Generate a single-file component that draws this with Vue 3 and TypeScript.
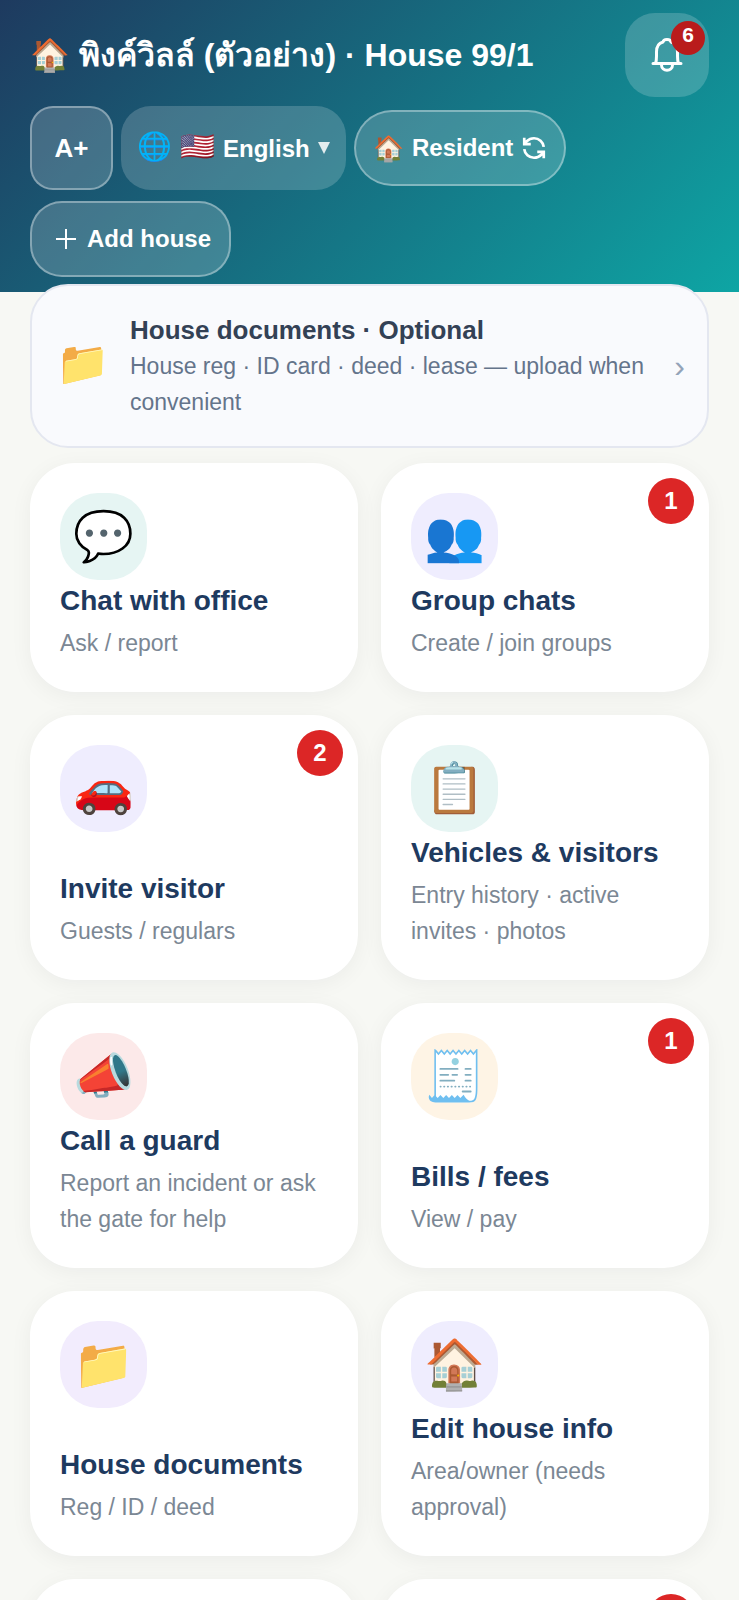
<script setup lang="ts">
import { ref } from 'vue'

interface Tile {
  icon: string
  tone: string
  title: string
  sub: string
  badge?: number
}

const language = ref('en')

const tiles: Tile[] = [
  { icon: '💬', tone: 'mint', title: 'Chat with office', sub: 'Ask / report' },
  { icon: '👥', tone: 'indigo', title: 'Group chats', sub: 'Create / join groups', badge: 1 },
  { icon: '🚗', tone: 'indigo', title: 'Invite visitor', sub: 'Guests / regulars', badge: 2 },
  { icon: '📋', tone: 'mint', title: 'Vehicles & visitors', sub: 'Entry history · active invites · photos' },
  { icon: '📣', tone: 'rose', title: 'Call a guard', sub: 'Report an incident or ask the gate for help' },
  { icon: '🧾', tone: 'amber', title: 'Bills / fees', sub: 'View / pay', badge: 1 },
  { icon: '📁', tone: 'violet', title: 'House documents', sub: 'Reg / ID / deed' },
  { icon: '🏠', tone: 'indigo', title: 'Edit house info', sub: 'Area/owner (needs approval)' },
]
</script>

<template>
  <div class="page">
    <header class="header">
      <div class="title-row">
        <h1 class="title">🏠 พิงค์วิลล์ (ตัวอย่าง) · House 99/1</h1>
        <button class="bell" type="button" aria-label="Notifications">
          <svg viewBox="0 0 32 36" aria-hidden="true">
            <path d="M2 26.500H30M4.500 26.500C5.500 24 5.500 22 5.500 19V15C5.500 9.500 8 6 12 5C12.500 1.500 19.500 1.500 20 5C24 6 26.500 9.500 26.500 15V19C26.500 22 26.500 24 27.500 26.500M10.500 28C10.500 35 21.500 35 21.500 28" />
          </svg>
          <span class="bell-count">6</span>
        </button>
      </div>
      <div class="controls">
        <button class="chip size-chip" type="button">A+</button>
        <label class="chip lang-chip">
          <span class="chip-emoji">🌐</span>
          <span class="chip-emoji">🇺🇸</span>
          <select v-model="language" class="lang-select" aria-label="Language">
            <option value="en">English</option>
          </select>
          <span class="caret" aria-hidden="true"></span>
        </label>
        <button class="chip role-chip" type="button">
          <span class="role-emoji">🏠</span>
          <span>Resident</span>
          <svg class="swap" viewBox="0 0 24 24" aria-hidden="true">
            <path d="M21 11a9 9 0 0 0-9-8 9.750 9.750 0 0 0-6.740 2.740L3 8M3 2.500v6h6M3 13a9 9 0 0 0 9 8 9.750 9.750 0 0 0 6.740-2.740L21 16M15 15.500h6v6" />
          </svg>
        </button>
        <button class="chip add-chip" type="button">
          <svg class="plus" viewBox="0 0 20 20" aria-hidden="true"><path d="M10 0V20M0 10H20" /></svg>
          <span>Add house</span>
        </button>
      </div>
    </header>

    <main class="content">
      <button class="notice" type="button">
        <span class="notice-icon">📁</span>
        <span class="notice-text">
          <strong class="notice-title">House documents · Optional</strong>
          <span class="notice-sub">House reg · ID card · deed · lease — upload when convenient</span>
        </span>
        <span class="chevron" aria-hidden="true">›</span>
      </button>

      <div class="grid">
        <button v-for="tile in tiles" :key="tile.title" class="tile" type="button">
          <span class="tile-icon" :class="tile.tone">{{ tile.icon }}</span>
          <span class="tile-text">
            <strong class="tile-title">{{ tile.title }}</strong>
            <span class="tile-sub">{{ tile.sub }}</span>
          </span>
          <span v-if="tile.badge" class="badge">{{ tile.badge }}</span>
        </button>
        <div class="tile"></div>
        <div class="tile"><span class="badge"></span></div>
      </div>
    </main>
  </div>
</template>

<style>
body {
  margin: 0;
  background: #f7f8f4;
}
</style>

<style scoped>
.page {
  height: 100vh;
  overflow: hidden;
  background: #f7f8f4;
  font-family: "Liberation Sans", Arial, sans-serif;
}

button,
select {
  margin: 0;
  font-family: inherit;
  cursor: pointer;
}

.header {
  padding: 13px 30px 15px;
  background: linear-gradient(135deg, #1e3a5f 0%, #0ea5a4 100%);
  color: #fff;
}

.title-row {
  display: flex;
  align-items: center;
  justify-content: space-between;
  gap: 16px;
}

.title {
  margin: 0;
  font-size: 32px;
  line-height: 48px;
  font-weight: 700;
  white-space: nowrap;
}

.bell {
  position: relative;
  display: flex;
  flex: none;
  align-items: center;
  justify-content: center;
  width: 84px;
  height: 84px;
  padding: 0;
  border: 0;
  border-radius: 30px;
  background: rgba(255, 255, 255, 0.18);
}

.bell svg {
  width: 32px;
  height: 36px;
  fill: none;
  stroke: #fff;
  stroke-width: 3;
  stroke-linecap: round;
  stroke-linejoin: round;
}

.bell-count {
  position: absolute;
  top: 8px;
  right: 4px;
  width: 34px;
  height: 34px;
  border-radius: 17px;
  background: #b91c1c;
  color: #fff;
  font-size: 21px;
  line-height: 27px;
  font-weight: 700;
  text-align: center;
}

.controls {
  display: flex;
  flex-wrap: wrap;
  align-items: center;
  gap: 11px 8px;
  margin-top: 9px;
}

.chip {
  display: flex;
  box-sizing: border-box;
  align-items: center;
  height: 76px;
  border: 2px solid rgba(255, 255, 255, 0.35);
  background: rgba(255, 255, 255, 0.18);
  color: #fff;
  font-size: 24px;
  font-weight: 700;
  white-space: nowrap;
}

.size-chip {
  justify-content: center;
  width: 83px;
  height: 84px;
  padding: 0;
  border-radius: 23px;
  font-size: 26px;
}

.lang-chip {
  gap: 8px;
  height: 84px;
  padding: 0 16px;
  border: 0;
  border-radius: 30px;
}

.chip-emoji {
  padding-bottom: 4px;
  font-size: 28px;
}

.lang-select {
  appearance: none;
  padding: 0;
  border: 0;
  background: transparent;
  color: #fff;
  font-size: 24px;
  font-weight: 700;
}

.caret {
  width: 12px;
  height: 12px;
  background: rgba(255, 255, 255, 0.85);
  clip-path: polygon(0 0, 100% 0, 50% 100%);
}

.role-chip {
  gap: 8px;
  padding: 0 17px;
  border-radius: 38px;
}

.role-emoji {
  font-size: 25px;
}

.swap {
  width: 26px;
  height: 26px;
  fill: none;
  stroke: #fff;
  stroke-width: 2.5;
}

.add-chip {
  gap: 11px;
  padding: 0 18px 0 24px;
  border-radius: 32px;
}

.plus {
  width: 20px;
  height: 20px;
  stroke: #fff;
  stroke-width: 2;
}

.content {
  position: relative;
  margin-top: -8px;
  padding: 0 30px;
}

.notice {
  display: flex;
  box-sizing: border-box;
  align-items: center;
  width: 100%;
  padding: 26px 22px 26px 24px;
  border: 2px solid #e4e7f0;
  border-radius: 38px;
  background: #f9fafd;
  text-align: left;
}

.notice-icon {
  flex: none;
  width: 74px;
  padding-bottom: 6px;
  font-size: 43px;
  line-height: 48px;
}

.notice-text {
  flex: 1;
}

.notice-title,
.notice-sub {
  display: block;
  line-height: 36px;
}

.notice-title {
  color: #334155;
  font-size: 26px;
}

.notice-sub {
  color: #64748b;
  font-size: 23px;
}

.chevron {
  flex: none;
  color: #94a3b8;
  font-size: 32px;
  line-height: 36px;
}

.grid {
  display: grid;
  grid-template-columns: repeat(2, minmax(0, 1fr));
  gap: 23px;
  margin-top: 15px;
}

.tile {
  position: relative;
  display: flex;
  box-sizing: border-box;
  flex-direction: column;
  align-items: flex-start;
  justify-content: space-between;
  min-height: 229px;
  padding: 30px 30px 31px;
  border: 0;
  border-radius: 45px;
  background: #fff;
  box-shadow: 0 4px 22px rgba(15, 23, 42, 0.05);
  text-align: left;
}

.tile-icon {
  display: flex;
  align-items: center;
  justify-content: center;
  width: 87px;
  height: 87px;
  border-radius: 38px;
  font-size: 49px;
  line-height: 1;
}

.mint {
  background: #e6f5f3;
}

.indigo {
  background: #efedfe;
}

.rose {
  background: #fce9e9;
}

.amber {
  background: #fef4e5;
}

.violet {
  background: #f2ecfd;
}

.tile-title {
  display: block;
  color: #1e3a5f;
  font-size: 28px;
  line-height: 42px;
}

.tile-sub {
  display: block;
  margin-top: 3px;
  color: #7b8794;
  font-size: 23px;
  line-height: 36px;
}

.badge {
  position: absolute;
  top: 15px;
  right: 15px;
  width: 46px;
  height: 46px;
  border-radius: 23px;
  background: #dc2626;
  color: #fff;
  font-size: 24px;
  line-height: 45px;
  font-weight: 700;
  text-align: center;
}
</style>
